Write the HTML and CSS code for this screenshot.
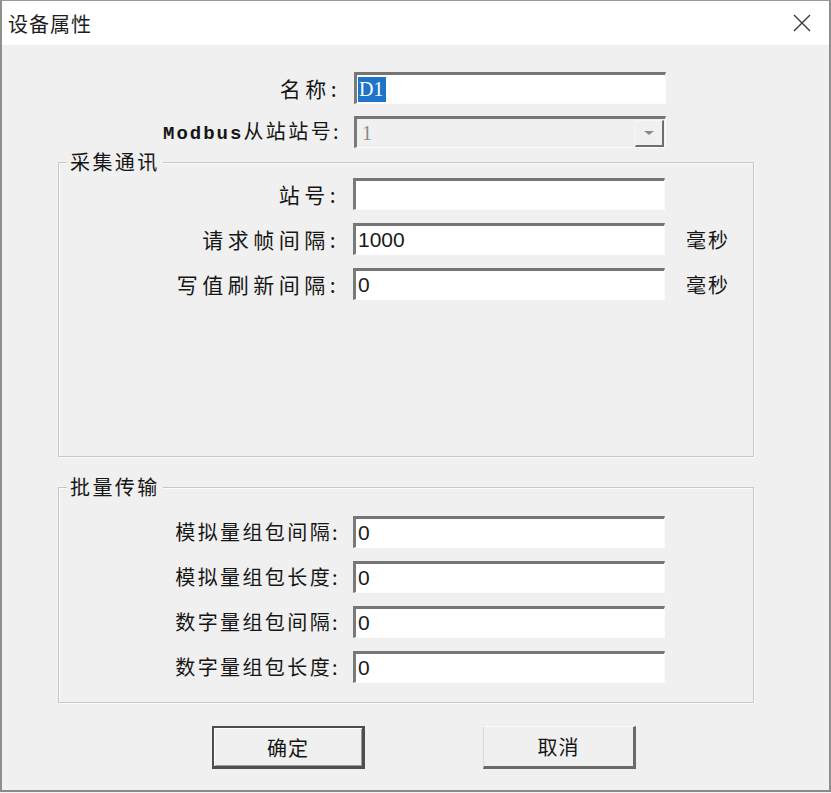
FILE: index.html
```html
<!DOCTYPE html>
<html lang="zh-CN">
<head>
<meta charset="utf-8">
<title>设备属性</title>
<link rel="stylesheet" href="styles.css">
</head>
<body>
<div class="window">
  <div class="titlebar">
    <span class="title">设备属性</span>
    <svg class="close" width="20" height="20" viewBox="0 0 20 20"><path d="M2 2 L18 18 M18 2 L2 18" stroke="#3a3a3a" stroke-width="1.4" fill="none"/></svg>
  </div>
  <div class="body">
    <div class="toprows">
      <div class="row">
        <span class="lbl lbl-top wide">名称:</span>
        <div class="field"><span class="sel">D1</span></div>
      </div>
      <div class="row">
        <span class="lbl lbl-top"><span class="latin">Modbus</span>从站站号:</span>
        <div class="field combo"><span class="combo-val">1</span><span class="drop"><svg width="12" height="6" viewBox="0 0 12 6"><path d="M1 1 L11 1 L6 5 Z" fill="#8a8a8a"/></svg></span></div>
      </div>
    </div>

    <div class="group g1">
      <span class="legend">采集通讯</span>
      <div class="row">
        <span class="lbl lbl-grp wide">站号:</span>
        <div class="field"></div>
      </div>
      <div class="row">
        <span class="lbl lbl-grp wide">请求帧间隔:</span>
        <div class="field"><span class="val">1000</span></div>
        <span class="unit">毫秒</span>
      </div>
      <div class="row">
        <span class="lbl lbl-grp wide">写值刷新间隔:</span>
        <div class="field"><span class="val">0</span></div>
        <span class="unit">毫秒</span>
      </div>
    </div>

    <div class="group g2">
      <span class="legend">批量传输</span>
      <div class="row">
        <span class="lbl lbl-grp">模拟量组包间隔:</span>
        <div class="field"><span class="val">0</span></div>
      </div>
      <div class="row">
        <span class="lbl lbl-grp">模拟量组包长度:</span>
        <div class="field"><span class="val">0</span></div>
      </div>
      <div class="row">
        <span class="lbl lbl-grp">数字量组包间隔:</span>
        <div class="field"><span class="val">0</span></div>
      </div>
      <div class="row">
        <span class="lbl lbl-grp">数字量组包长度:</span>
        <div class="field"><span class="val">0</span></div>
      </div>
    </div>

    <div class="buttons">
      <div class="btn btn-default">确定</div>
      <div class="btn">取消</div>
    </div>
  </div>
</div>
</body>
</html>
```
FILE: styles.css
```css
* { box-sizing: border-box; }
html, body { margin: 0; padding: 0; }
body {
  background: #f4f4f4;
  font-family: "Noto Sans CJK SC", "Noto Sans", sans-serif;
  color: #161616;
}
.window {
  width: 831px;
  height: 792px;
  border-left: 2px solid #8e8e8e;
  border-top: 1px solid #9a9a9a;
  border-right: 2px solid #8e8e8e;
  border-bottom: 2px solid #8a8a8a;
  background: #f0f0f0;
  display: flex;
  flex-direction: column;
}
.titlebar {
  height: 44px;
  background: #ffffff;
  display: flex;
  align-items: center;
  justify-content: space-between;
  padding: 0 17px 0 6px;
  flex: none;
}
.title {
  font-size: 20px;
  letter-spacing: 1px;
  color: #1e1e1e;
}
.close { display: block; }

.body {
  flex: 1;
  padding-top: 27px;
  display: flex;
  flex-direction: column;
}
.toprows {
  display: flex;
  flex-direction: column;
  gap: 12px;
}
.row {
  display: flex;
  align-items: center;
  height: 32px;
}
.lbl {
  flex: none;
  text-align: right;
  font-size: 20px;
  letter-spacing: 2.4px;
  white-space: nowrap;
  line-height: 32px;
}
.lbl.wide {
  font-size: 21px;
  letter-spacing: 4.5px;
}
.lbl-top { width: 339px; }
.lbl-grp { width: 281px; }
.latin {
  font-family: "Liberation Mono", monospace;
  font-weight: bold;
  font-size: 19px;
  letter-spacing: 2px;
}
.field {
  flex: none;
  margin-left: 13px;
  width: 312px;
  height: 32px;
  background: #ffffff;
  border-top: 3px solid #757575;
  border-left: 3px solid #7a7a7a;
  border-right: 1px solid #fcfcfc;
  border-bottom: 1px solid #fcfcfc;
  display: flex;
  align-items: center;
  padding-left: 1px;
}
.sel {
  background: #1f73c9;
  color: #fff;
  font-family: "Liberation Serif", serif;
  font-size: 20px;
  line-height: 25px;
  padding: 0 3px 0 1px;
}
.val {
  font-family: "Liberation Sans", sans-serif;
  font-size: 21px;
  color: #1a1a1a;
  padding-left: 1px;
}
.combo {
  background: #f0f0f0;
  justify-content: space-between;
}
.combo-val {
  font-family: "Liberation Serif", serif;
  font-size: 20px;
  color: #8a8a8a;
  padding-left: 4px;
}
.drop {
  width: 29px;
  height: 27px;
  margin-right: 1px;
  border-left: 1px solid #f7f7f7;
  border-top: 1px solid #f7f7f7;
  border-right: 2px solid #6e6e6e;
  border-bottom: 2px solid #6e6e6e;
  display: flex;
  align-items: center;
  justify-content: center;
}
.drop svg { display: block; }
.unit {
  margin-left: 21px;
  font-size: 20px;
  letter-spacing: 2px;
}

.group {
  position: relative;
  margin-left: 56px;
  width: 696px;
  border: 1px solid #c6c6c6;
  box-shadow: inset 1px 1px 0 #fbfbfb, 1px 1px 0 #fbfbfb;
  display: flex;
  flex-direction: column;
  gap: 13px;
}
.g1 {
  margin-top: 14px;
  height: 295px;
  padding-top: 15px;
}
.g2 {
  margin-top: 30px;
  height: 216px;
  padding-top: 28px;
}
.legend {
  position: absolute;
  top: -12px;
  left: 8px;
  padding: 0 3px;
  background: #f0f0f0;
  font-size: 20px;
  line-height: 22px;
  letter-spacing: 2.4px;
}

.buttons {
  margin-top: 23px;
  padding-left: 210px;
  display: flex;
  gap: 118px;
}
.btn {
  width: 153px;
  height: 43px;
  display: flex;
  align-items: center;
  justify-content: center;
  font-size: 20px;
  letter-spacing: 1px;
  background: #f0f0f0;
  border-top: 1px solid #fafafa;
  border-left: 1px solid #dadada;
  border-right: 3px solid #6a6a6a;
  border-bottom: 3px solid #6a6a6a;
}
.btn-default {
  border: 2px solid #4e4e4e;
  border-right-width: 3px;
  border-bottom-width: 3px;
  box-shadow: inset 1px 1px 0 #ffffff, inset -1px -1px 0 #9a9a9a;
}
```
